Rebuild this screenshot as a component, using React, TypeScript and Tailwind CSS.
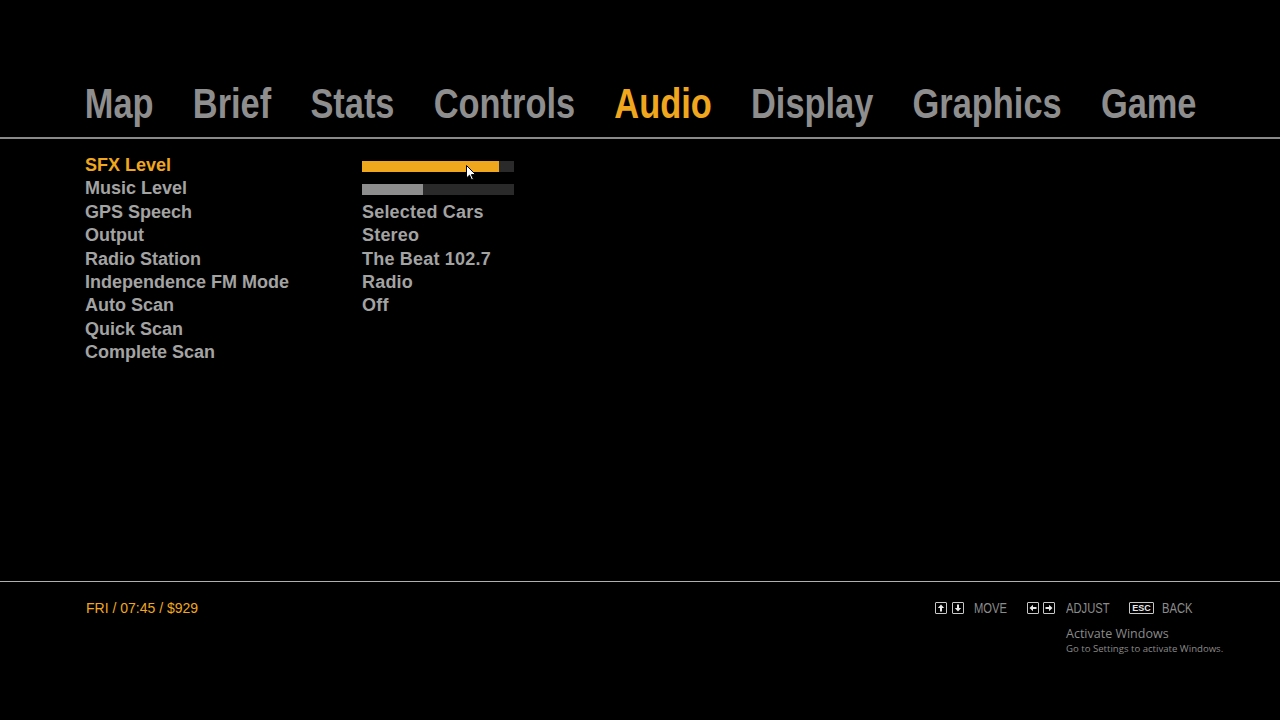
const ORANGE = "#f0a71e";

const TABS = ["Map", "Brief", "Stats", "Controls", "Audio", "Display", "Graphics", "Game"];

type Row = { label: string; value?: string; level?: number; color?: string };

const ROWS: Row[] = [
  { label: "SFX Level", level: 0.9, color: ORANGE },
  { label: "Music Level", level: 0.4, color: "#8d8d8d" },
  { label: "GPS Speech", value: "Selected Cars" },
  { label: "Output", value: "Stereo" },
  { label: "Radio Station", value: "The Beat 102.7" },
  { label: "Independence FM Mode", value: "Radio" },
  { label: "Auto Scan", value: "Off" },
  { label: "Quick Scan" },
  { label: "Complete Scan" },
];

function KeyBox({ children, wide }: { children: React.ReactNode; wide?: boolean }) {
  return (
    <span
      className={`flex h-[12px] items-center justify-center rounded-[1px] border border-[#c8c8c8] text-[#e6e6e6] ${
        wide ? "w-[25px]" : "w-[12px]"
      }`}
    >
      {children}
    </span>
  );
}

function Arrow({ dir }: { dir: "up" | "down" | "left" | "right" }) {
  const rot = { up: 0, right: 90, down: 180, left: 270 }[dir];
  return (
    <svg width="8" height="8" viewBox="0 0 8 8" style={{ transform: `rotate(${rot}deg)` }}>
      <path d="M4 0.5 L7.2 4 L5 4 L5 7.5 L3 7.5 L3 4 L0.8 4 Z" fill="currentColor" />
    </svg>
  );
}

// narrow caption: Arial squeezed into the width the condensed game font takes
function Narrow({ text, width }: { text: string; width: string }) {
  return (
    <span className={`inline-block overflow-visible whitespace-nowrap ${width}`}>
      <span className="inline-block origin-left scale-x-[0.8]">{text}</span>
    </span>
  );
}

function Cursor() {
  return (
    <svg
      className="absolute left-[466px] top-[165px]"
      width="11"
      height="16"
      viewBox="0 0 11 16"
    >
      <path
        d="M0.5 0.5 L0.5 13 L3.5 10.2 L5.6 15 L7.4 14.2 L5.4 9.6 L9.6 9.6 Z"
        fill="#ffffff"
        stroke="#000000"
        strokeWidth="1"
        strokeLinejoin="round"
      />
    </svg>
  );
}

export default function App() {
  return (
    <div className="relative h-[720px] w-full overflow-hidden bg-black">
      <nav
        className="flex origin-left scale-x-[0.8] gap-[49px] pl-[106px] pt-[77px] text-[43px] font-bold leading-[52px] whitespace-nowrap text-[#8e8e8e]"
        style={{ fontFamily: '"Liberation Sans", Arial, sans-serif' }}
      >
        {TABS.map((t) => (
          <span key={t} style={t === "Audio" ? { color: ORANGE } : undefined}>
            {t}
          </span>
        ))}
      </nav>
      <div className="mt-[8px] h-[2px] w-full bg-[#8a8a8a]" />

      <section
        className="h-[442px] px-[85px] pt-[15px] text-[18px] font-bold leading-[23.4px] text-[#a3a3a3]"
        style={{ fontFamily: '"Liberation Sans", Arial, sans-serif' }}
      >
        {ROWS.map((r, i) => (
          <div key={r.label} className="flex h-[23.4px]">
            <span className="w-[277px]" style={i === 0 ? { color: ORANGE } : undefined}>
              {r.label}
            </span>
            {r.level !== undefined ? (
              <div className="mt-[7px] h-[11px] w-[152px] bg-[#2a2a2a]">
                <div className="h-full" style={{ width: `${r.level * 100}%`, backgroundColor: r.color }} />
              </div>
            ) : (
              <span className="tracking-[0.2px]">{r.value}</span>
            )}
          </div>
        ))}
      </section>

      <div className="h-[1px] w-full bg-[#b0b0b0]" />

      <footer
        className="flex items-center justify-between px-[86px] pt-[18px] text-[14px] leading-[16px]"
        style={{ fontFamily: '"Liberation Sans", Arial, sans-serif' }}
      >
        <span style={{ color: ORANGE }}>FRI / 07:45 / $929</span>
        <div className="flex items-center text-[#8c8c8c]">
          <div className="flex items-center gap-[5px]">
            <KeyBox>
              <Arrow dir="up" />
            </KeyBox>
            <KeyBox>
              <Arrow dir="down" />
            </KeyBox>
          </div>
          <span className="ml-[10px]">
            <Narrow text="MOVE" width="w-[32px]" />
          </span>
          <div className="ml-[21px] flex items-center gap-[4px]">
            <KeyBox>
              <Arrow dir="left" />
            </KeyBox>
            <KeyBox>
              <Arrow dir="right" />
            </KeyBox>
          </div>
          <span className="ml-[11px]">
            <Narrow text="ADJUST" width="w-[44px]" />
          </span>
          <span className="ml-[19px]">
            <KeyBox wide>
              <span className="text-[9px] font-bold leading-none text-[#e6e6e6]">ESC</span>
            </KeyBox>
          </span>
          <span className="ml-[8px]">
            <Narrow text="BACK" width="w-[32px]" />
          </span>
        </div>
      </footer>

      <div
        className="absolute left-[1066px] top-[626px] text-[#8a8a8a]"
        style={{ fontFamily: '"Open Sans", "Noto Sans", sans-serif' }}
      >
        <div className="text-[12.5px] leading-[16px]">Activate Windows</div>
        <div className="text-[9.6px] leading-[14px]">Go to Settings to activate Windows.</div>
      </div>

      <Cursor />
    </div>
  );
}
